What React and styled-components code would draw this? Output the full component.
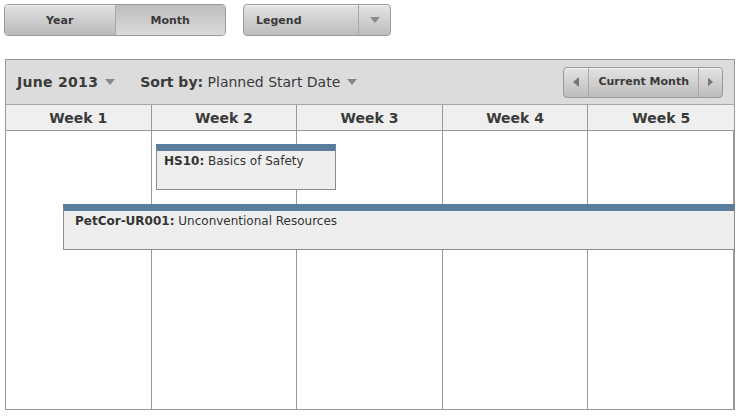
import React from 'react';
import styled, { createGlobalStyle, css } from 'styled-components';

const GlobalStyle = createGlobalStyle`
    body {
        margin: 0;
        background: #ffffff;
        font-family: 'DejaVu Sans', Verdana, sans-serif;
        color: #333;
    }
`;

const weeks = ['Week 1', 'Week 2', 'Week 3', 'Week 4', 'Week 5'];

const events = [
    { code: 'HS10', title: 'Basics of Safety', left: 150, top: 13, width: 180, pad: 7 },
    { code: 'PetCor-UR001', title: 'Unconventional Resources', left: 57, top: 73, pad: 11 },
];

const buttonFace = css`
    background: linear-gradient(#e4e4e4, #bcbcbc);
    border: 1px solid #9a9a9a;
    border-radius: 4px;
    box-shadow: inset 0 1px 0 rgba(255, 255, 255, 0.6);
`;

function Caret({ color = '#777' }) {
    return (
        <svg width="10" height="6" viewBox="0 0 10 6">
            <path d="M0 0 H10 L5 6 Z" fill={color} />
        </svg>
    );
}

function Arrow({ dir }) {
    return (
        <svg width="6" height="10" viewBox="0 0 6 10">
            {dir === 'left' ? <path d="M6 0 V10 L0 5 Z" fill="#777" /> : <path d="M0 0 V10 L6 5 Z" fill="#777" />}
        </svg>
    );
}

function App() {
    return (
        <Page>
            <GlobalStyle />
            <TopBar>
                <Segmented>
                    <SegButton>Year</SegButton>
                    <SegButton $active>Month</SegButton>
                </Segmented>
                <Dropdown>
                    <span className="label">Legend</span>
                    <span className="caret">
                        <Caret color="#8a8a8a" />
                    </span>
                </Dropdown>
            </TopBar>

            <Calendar>
                <Toolbar>
                    <Picker $wide>
                        <b>June 2013</b>
                        <Caret color="#888" />
                    </Picker>
                    <Picker>
                        <span>
                            <b>Sort by:</b> Planned Start Date
                        </span>
                        <Caret color="#888" />
                    </Picker>
                    <Pager>
                        <PagerButton $narrow>
                            <Arrow dir="left" />
                        </PagerButton>
                        <PagerButton>Current Month</PagerButton>
                        <PagerButton $narrow>
                            <Arrow dir="right" />
                        </PagerButton>
                    </Pager>
                </Toolbar>

                <WeekRow>
                    {weeks.map((w) => (
                        <WeekCell key={w}>{w}</WeekCell>
                    ))}
                </WeekRow>

                <Body>
                    {weeks.map((w) => (
                        <Column key={w} />
                    ))}
                    {events.map((e) => (
                        <Event
                            key={e.code}
                            $pad={e.pad}
                            style={{ left: e.left, top: e.top, width: e.width, right: e.width ? 'auto' : -1 }}
                        >
                            <b>{e.code}:</b> {e.title}
                        </Event>
                    ))}
                </Body>
            </Calendar>
        </Page>
    );
}

const Page = styled.div`
    padding: 4px 0 0 4px;
    width: 739px;
    height: 416px;
    box-sizing: border-box;
`;

const TopBar = styled.div`
    display: flex;
    gap: 17px;
    height: 32px;
`;

const Segmented = styled.div`
    display: flex;
    width: 222px;
    height: 32px;
    border: 1px solid #9a9a9a;
    border-radius: 4px;
    overflow: hidden;
    box-sizing: border-box;
`;

const SegButton = styled.div`
    flex: 1;
    display: flex;
    align-items: center;
    justify-content: center;
    font-size: 11px;
    font-weight: bold;
    color: #3a3a3a;
    background: linear-gradient(#e2e2e2, #b9b9b9);
    box-shadow: inset 0 1px 0 rgba(255, 255, 255, 0.6);
    ${(p) =>
        p.$active &&
        css`
            background: linear-gradient(#bdbdbd, #dadada);
            box-shadow: none;
            border-left: 1px solid #a8a8a8;
        `}
`;

const Dropdown = styled.div`
    ${buttonFace};
    display: flex;
    width: 148px;
    height: 32px;
    box-sizing: border-box;
    font-size: 11px;
    font-weight: bold;
    color: #3a3a3a;

    .label {
        flex: 1;
        display: flex;
        align-items: center;
        padding-left: 12px;
    }
    .caret {
        width: 31px;
        display: flex;
        align-items: center;
        justify-content: center;
        border-left: 1px solid #a8a8a8;
    }
`;

const Calendar = styled.div`
    margin: 23px 0 0 1px;
    width: 730px;
    height: 351px;
    box-sizing: border-box;
    border: 1px solid #999;
    display: flex;
    flex-direction: column;
`;

const Toolbar = styled.div`
    height: 44px;
    flex-shrink: 0;
    display: flex;
    align-items: center;
    gap: 25px;
    padding: 0 11px 0 11px;
    background: #dcdcdc;
    border-bottom: 1px solid #a8a8a8;
    font-size: 14px;
    color: #3a3a3a;
`;

const Picker = styled.div`
    display: flex;
    align-items: center;
    gap: 7px;
    b {
        font-weight: bold;
        letter-spacing: ${(p) => (p.$wide ? '0.3px' : '0')};
    }
`;

const Pager = styled.div`
    margin-left: auto;
    display: flex;
    height: 31px;
    ${buttonFace};
    box-sizing: border-box;
    overflow: hidden;
    padding: 0;
`;

const PagerButton = styled.div`
    display: flex;
    align-items: center;
    justify-content: center;
    font-size: 11px;
    font-weight: bold;
    color: #3a3a3a;
    padding: 0 9px 1px;
    width: ${(p) => (p.$narrow ? '24px' : 'auto')};
    box-sizing: border-box;
    & + & {
        border-left: 1px solid #a8a8a8;
    }
`;

const WeekRow = styled.div`
    display: grid;
    grid-template-columns: repeat(5, 1fr);
    height: 25px;
    flex-shrink: 0;
    background: #efefef;
    border-bottom: 1px solid #999;
`;

const WeekCell = styled.div`
    display: flex;
    align-items: center;
    justify-content: center;
    font-size: 14px;
    font-weight: bold;
    color: #3a3a3a;
    &:not(:last-child) {
        border-right: 1px solid #999;
    }
`;

const Body = styled.div`
    position: relative;
    flex: 1;
    display: grid;
    grid-template-columns: repeat(5, 1fr);
    background: #fff;
`;

const Column = styled.div`
    &:not(:last-child) {
        border-right: 1px solid #999;
    }
`;

const Event = styled.div`
    position: absolute;
    height: 46px;
    box-sizing: border-box;
    background: #eeeeee;
    border: 1px solid #8c8c8c;
    border-top: 7px solid #5a7d9d;
    padding: 3px 0 0 ${(p) => p.$pad}px;
    font-size: 12px;
    color: #333;
    white-space: nowrap;
    b {
        font-weight: bold;
    }
`;

export default App;
